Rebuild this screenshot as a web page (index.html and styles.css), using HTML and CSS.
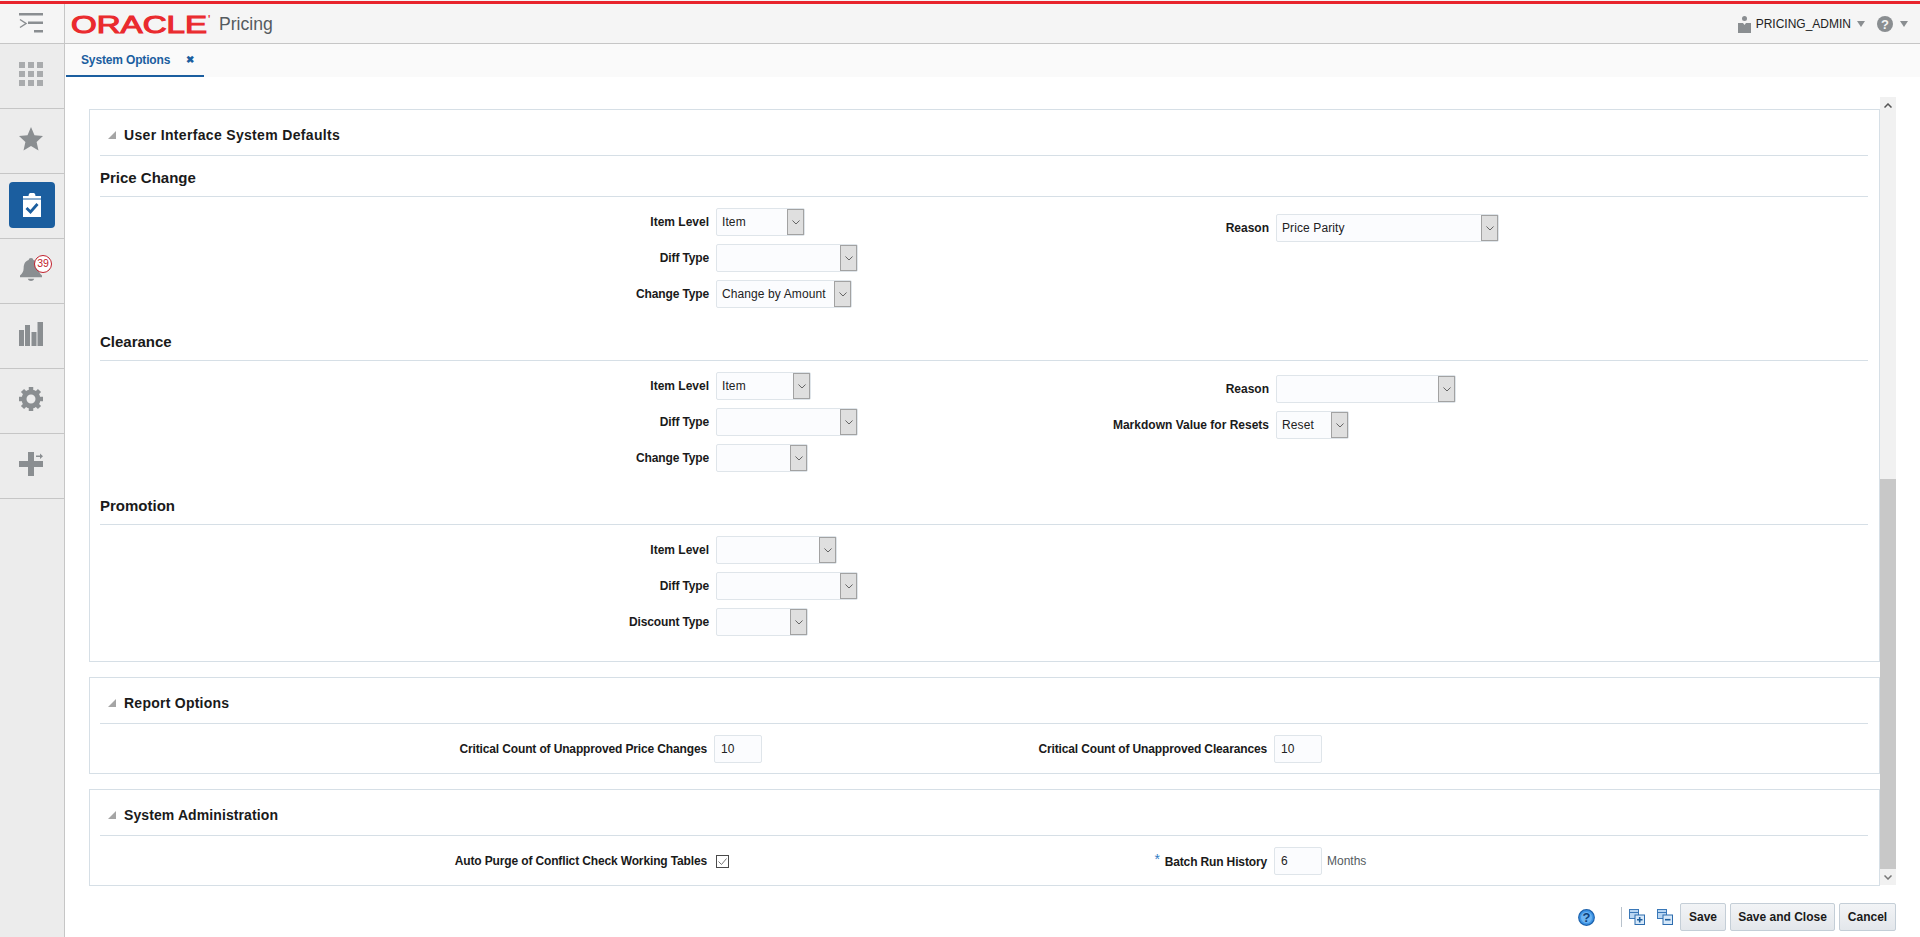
FILE: index.html
```html
<!DOCTYPE html>
<html lang="en">
<head>
<meta charset="utf-8">
<title>System Options</title>
<link rel="stylesheet" href="styles.css">
</head>
<body>
<header class="topbar">
  <div class="burger">
    <svg width="24" height="20" viewBox="0 0 24 20"><path d="M0 0h24v2.500H0zM9 8.500h15v2.500H9zM15 17h9v2.500h-9z" fill="#8a8e91"/><path d="M1 6.500l6 4-6 4" fill="none" stroke="#8a8e91" stroke-width="1.500"/></svg>
  </div>
  <div class="brand">
    <svg class="logo" width="142" height="28" viewBox="0 0 142 28"><text x="0" y="23" textLength="136" lengthAdjust="spacingAndGlyphs" class="logo-text">ORACLE</text><text x="137" y="13" class="logo-mark">'</text></svg>
    <span class="product">Pricing</span>
  </div>
  <div class="user">
    <svg width="13" height="17" viewBox="0 0 13 17"><circle cx="6.500" cy="2.500" r="2.500" fill="#8a8e91"/><path d="M0 7h5l1.500 2L8 7h5v10H0z" fill="#8a8e91"/></svg>
    <span class="user-name">PRICING_ADMIN</span>
    <span class="caret"></span>
    <svg class="help-grey" width="16" height="16" viewBox="0 0 16 16"><circle cx="8" cy="8" r="8" fill="#8a8e91"/><text x="8" y="12.500" text-anchor="middle" class="q-mark">?</text></svg>
    <span class="caret caret-last"></span>
  </div>
</header>
<div class="body-row">
  <nav class="sidebar">
    <div class="nav-item">
      <svg width="24" height="24" viewBox="0 0 24 24" fill="#a9abad"><path d="M0 0h6v6H0zM9 0h6v6H9zM18 0h6v6h-6zM0 9h6v6H0zM9 9h6v6H9zM18 9h6v6h-6zM0 18h6v6H0zM9 18h6v6H9zM18 18h6v6h-6z"/></svg>
    </div>
    <div class="nav-item">
      <svg width="24" height="24" viewBox="0 0 24 24"><path d="M12 0l3.500 8.300 8.500.8-6.400 5.800 1.900 8.700L12 19l-7.500 4.600 1.900-8.700L0 9.100l8.500-.8z" fill="#8a8e91"/></svg>
    </div>
    <div class="nav-item">
      <div class="nav-active">
        <svg width="18" height="24" viewBox="0 0 18 24"><path d="M0 3h5.500a3.500 3.500 0 0 1 7 0H18v21H0z" fill="#fff"/><path d="M0 6h18" stroke="#1b5e9f" stroke-width="1"/><path d="M3.500 15l4 4 7-8" fill="none" stroke="#1b5e9f" stroke-width="2.800"/></svg>
      </div>
    </div>
    <div class="nav-item">
      <svg class="bell" width="22" height="24" viewBox="0 0 24 26"><path d="M12 1c1.500 0 2.500 1 2.500 2.200C18.500 4.500 20 8 20 12c0 4 1.500 6 4 8v2H0v-2c2.500-2 4-4 4-8 0-4 1.500-7.500 5.500-8.800C9.500 2 10.500 1 12 1z" fill="#8a8e91"/><path d="M8.500 23.500h7c-.5 1.500-2 2.500-3.500 2.500s-3-1-3.500-2.500z" fill="#8a8e91"/></svg>
      <span class="badge">39</span>
    </div>
    <div class="nav-item">
      <svg width="24" height="24" viewBox="0 0 24 24" fill="#8a8e91"><path d="M0 8h5v16H0zM6 3h5v21H6zM12.500 10h5v14h-5zM18.500 0H24v24h-5.500z"/></svg>
    </div>
    <div class="nav-item">
      <svg width="24" height="24" viewBox="0 0 24 24"><circle cx="12" cy="12" r="7" fill="none" stroke="#8a8e91" stroke-width="5"/><path d="M12 0v5M12 19v5M0 12h5M19 12h5M3.500 3.500l3.500 3.500M17 17l3.500 3.500M3.500 20.500L7 17M17 7l3.500-3.500" stroke="#8a8e91" stroke-width="4.500"/></svg>
    </div>
    <div class="nav-item">
      <svg width="24" height="24" viewBox="0 0 24 24" fill="#8a8e91"><path d="M9 0h6v9h9v6h-9v9H9v-9H0V9h9z"/><path d="M17 3.500h4V1.500l3 2.700-3 2.700V5h-4z"/></svg>
    </div>
  </nav>
  <main class="main">
    <div class="tabbar">
      <div class="tab"><span class="tab-label">System Options</span><span class="tab-close">&#10006;</span></div>
    </div>
    <div class="scroller">
      <div class="panels">
        <section class="panel panel-main">
          <h2 class="panel-title"><span class="disclosure"></span><span class="wide">User Interface System Defaults</span></h2>
          <h3 class="sub-title">Price Change</h3>
          <div class="form">
            <div class="col-left">
              <div class="row"><label class="lbl lbl-loose">Item Level</label><div class="sel w89"><span class="val">Item</span><span class="drop"><svg class="chev" width="9" height="5" viewBox="0 0 9 5"><path d="M.5.500l4 4 4-4" fill="none" stroke="#555" stroke-width="1"/></svg></span></div></div>
              <div class="row"><label class="lbl">Diff Type</label><div class="sel w142"><span class="val"></span><span class="drop"><svg class="chev" width="9" height="5" viewBox="0 0 9 5"><path d="M.5.500l4 4 4-4" fill="none" stroke="#555" stroke-width="1"/></svg></span></div></div>
              <div class="row"><label class="lbl">Change Type</label><div class="sel w136"><span class="val">Change by Amount</span><span class="drop"><svg class="chev" width="9" height="5" viewBox="0 0 9 5"><path d="M.5.500l4 4 4-4" fill="none" stroke="#555" stroke-width="1"/></svg></span></div></div>
            </div>
            <div class="col-right col-right-low">
              <div class="row"><label class="lbl lbl-loose">Reason</label><div class="sel w223"><span class="val">Price Parity</span><span class="drop"><svg class="chev" width="9" height="5" viewBox="0 0 9 5"><path d="M.5.500l4 4 4-4" fill="none" stroke="#555" stroke-width="1"/></svg></span></div></div>
            </div>
          </div>
          <h3 class="sub-title">Clearance</h3>
          <div class="form">
            <div class="col-left">
              <div class="row"><label class="lbl lbl-loose">Item Level</label><div class="sel w95"><span class="val">Item</span><span class="drop"><svg class="chev" width="9" height="5" viewBox="0 0 9 5"><path d="M.5.500l4 4 4-4" fill="none" stroke="#555" stroke-width="1"/></svg></span></div></div>
              <div class="row"><label class="lbl">Diff Type</label><div class="sel w142"><span class="val"></span><span class="drop"><svg class="chev" width="9" height="5" viewBox="0 0 9 5"><path d="M.5.500l4 4 4-4" fill="none" stroke="#555" stroke-width="1"/></svg></span></div></div>
              <div class="row"><label class="lbl">Change Type</label><div class="sel w92"><span class="val"></span><span class="drop"><svg class="chev" width="9" height="5" viewBox="0 0 9 5"><path d="M.5.500l4 4 4-4" fill="none" stroke="#555" stroke-width="1"/></svg></span></div></div>
            </div>
            <div class="col-right">
              <div class="row"><label class="lbl lbl-loose">Reason</label><div class="sel w180"><span class="val"></span><span class="drop"><svg class="chev" width="9" height="5" viewBox="0 0 9 5"><path d="M.5.500l4 4 4-4" fill="none" stroke="#555" stroke-width="1"/></svg></span></div></div>
              <div class="row"><label class="lbl lbl-loose">Markdown Value for Resets</label><div class="sel w73"><span class="val">Reset</span><span class="drop"><svg class="chev" width="9" height="5" viewBox="0 0 9 5"><path d="M.5.500l4 4 4-4" fill="none" stroke="#555" stroke-width="1"/></svg></span></div></div>
            </div>
          </div>
          <h3 class="sub-title">Promotion</h3>
          <div class="form form-last">
            <div class="col-left">
              <div class="row"><label class="lbl lbl-loose">Item Level</label><div class="sel w121"><span class="val"></span><span class="drop"><svg class="chev" width="9" height="5" viewBox="0 0 9 5"><path d="M.5.500l4 4 4-4" fill="none" stroke="#555" stroke-width="1"/></svg></span></div></div>
              <div class="row"><label class="lbl">Diff Type</label><div class="sel w142"><span class="val"></span><span class="drop"><svg class="chev" width="9" height="5" viewBox="0 0 9 5"><path d="M.5.500l4 4 4-4" fill="none" stroke="#555" stroke-width="1"/></svg></span></div></div>
              <div class="row"><label class="lbl">Discount Type</label><div class="sel w92"><span class="val"></span><span class="drop"><svg class="chev" width="9" height="5" viewBox="0 0 9 5"><path d="M.5.500l4 4 4-4" fill="none" stroke="#555" stroke-width="1"/></svg></span></div></div>
            </div>
          </div>
        </section>
        <section class="panel">
          <h2 class="panel-title"><span class="disclosure"></span>Report Options</h2>
          <div class="pair">
            <div class="row pair-left"><label class="lbl">Critical Count of Unapproved Price Changes</label><div class="num">10</div></div>
            <div class="row pair-right"><label class="lbl">Critical Count of Unapproved Clearances</label><div class="num">10</div></div>
          </div>
        </section>
        <section class="panel">
          <h2 class="panel-title"><span class="disclosure"></span><span class="narrow">System Administration</span></h2>
          <div class="pair">
            <div class="row pair-left"><label class="lbl">Auto Purge of Conflict Check Working Tables</label><span class="check"><svg width="13" height="13" viewBox="0 0 13 13"><rect x=".5" y=".5" width="12" height="12" fill="#fff" stroke="#4a4a4a"/><path d="M2.500 6.500l3 3 5-6" fill="none" stroke="#777" stroke-width="1"/></svg></span></div>
            <div class="row pair-right"><label class="lbl"><span class="req">*</span>Batch Run History</label><div class="num">6</div><span class="unit">Months</span></div>
          </div>
        </section>
      </div>
      <div class="scrollbar">
        <div class="sb-btn"><svg width="8" height="5" viewBox="0 0 8 5"><path d="M.5 4.500L4 1l3.500 3.500" fill="none" stroke="#555" stroke-width="1.500"/></svg></div>
        <div class="sb-track"></div>
        <div class="sb-thumb"></div>
        <div class="sb-btn"><svg width="8" height="5" viewBox="0 0 8 5"><path d="M.5.500L4 4 7.500.500" fill="none" stroke="#777" stroke-width="1.500"/></svg></div>
      </div>
    </div>
    <footer class="footer">
      <svg class="help-blue" width="17" height="17" viewBox="0 0 17 17"><circle cx="8.500" cy="8.500" r="7.800" fill="#3f95e6" stroke="#1c62ad" stroke-width="1.200"/><circle cx="8.500" cy="8.500" r="5.500" fill="#6db4f2"/><text x="8.500" y="12.800" text-anchor="middle" class="q-mark q-navy">?</text></svg>
      <span class="divider"></span>
      <svg class="tool" width="16" height="16" viewBox="0 0 16 16"><rect x=".5" y=".5" width="9" height="9" fill="#b9d6f2" stroke="#3a78b8"/><path d="M.5 3.500h9" stroke="#3a78b8"/><rect x="6" y="6" width="9.500" height="9.500" fill="#d6e8f9" stroke="#2d6cae"/><path d="M8 10.700h5.500M10.700 8v5.500" stroke="#1c5d9c" stroke-width="1.600"/></svg>
      <svg class="tool tool-2" width="16" height="16" viewBox="0 0 16 16"><rect x=".5" y=".5" width="9" height="9" fill="#b9d6f2" stroke="#3a78b8"/><path d="M.5 3.500h9" stroke="#3a78b8"/><rect x="6" y="6" width="9.500" height="9.500" fill="#d6e8f9" stroke="#2d6cae"/><path d="M8 10.700h5.500" stroke="#1c5d9c" stroke-width="1.600"/></svg>
      <button class="btn btn-first btn-save">Save</button>
      <button class="btn btn-close">Save and Close</button>
      <button class="btn btn-cancel">Cancel</button>
    </footer>
  </main>
</div>
</body>
</html>
```
FILE: styles.css
```css
* { box-sizing: border-box; }
html, body { margin: 0; height: 100%; overflow: hidden; }
body {
  font-family: "Liberation Sans", Arial, sans-serif;
  font-size: 12px;
  color: #1a1a1a;
  background: #fff;
  display: flex;
  flex-direction: column;
}
.topbar {
  height: 44px;
  flex: none;
  display: flex;
  align-items: center;
  background: #f5f5f5;
  border-bottom: 1px solid #c6c6c6;
  position: relative;
  padding-top: 5px;
}
.topbar::before {
  content: "";
  position: absolute;
  left: 0; right: 0; top: 1px;
  height: 3px;
  background: #e8242c;
}
.burger {
  width: 65px;
  height: 39px;
  margin-top: -1px;
  align-self: flex-start;
  padding: 9px 0 0 19px;
  border-right: 1px solid #c6c6c6;
}
.burger svg { display: block; }
.brand { display: flex; align-items: center; margin-left: 6px; }
.logo { display: block; overflow: visible; }
.logo-text { font-family: "Liberation Sans", sans-serif; font-weight: 400; font-size: 24px; fill: #ea2a2e; stroke: #ea2a2e; stroke-width: 1.1px; }
.logo-mark { font-family: "Liberation Sans", sans-serif; font-weight: 700; font-size: 10px; fill: #ea2a2e; }
.product { font-size: 17.6px; color: #555b60; margin-left: 6px; }
.user { margin-left: auto; display: flex; align-items: center; padding-right: 12px; }
.user-name { font-size: 12px; color: #222; margin-left: 5px; }
.caret {
  width: 0; height: 0;
  border-left: 4.5px solid transparent;
  border-right: 4.5px solid transparent;
  border-top: 6px solid #8a8e91;
  margin-left: 6px;
}
.caret-last { margin-left: 7px; }
.help-grey { margin-left: 12px; }
.q-mark { font-family: "Liberation Sans", sans-serif; font-weight: 700; font-size: 13px; fill: #f5f5f5; }
.q-navy { fill: #0f3f7a; }
.body-row { flex: 1; display: flex; min-height: 0; }
.sidebar {
  width: 65px;
  flex: none;
  background: #ececec;
  border-right: 1px solid #c6c6c6;
}
.nav-item {
  height: 65px;
  border-bottom: 1px solid #c6c6c6;
  display: flex;
  align-items: center;
  justify-content: center;
  position: relative;
}
.nav-item > svg { margin: 0 2px 5px 0; }
.nav-item > .bell { margin: 0 3px 4px 0; }
.nav-active {
  width: 46px;
  height: 46px;
  margin-bottom: 2px;
  border-radius: 4px;
  background: #1b5e9f;
  display: flex;
  align-items: center;
  justify-content: center;
}
.badge {
  position: absolute;
  left: 34px;
  top: 16px;
  width: 18px;
  height: 18px;
  border-radius: 50%;
  background: #fff;
  border: 1.500px solid #c0202c;
  color: #c0202c;
  font-size: 10.5px;
  line-height: 15px;
  text-align: center;
}
.main { flex: 1; min-width: 0; display: flex; flex-direction: column; }
.tabbar { height: 33px; flex: none; background: #fafafa; padding-left: 1px; }
.tab {
  width: 138px;
  height: 33px;
  padding-left: 15px;
  display: flex;
  align-items: center;
  border-bottom: 2px solid #1b5e9f;
  color: #1b5e9f;
  font-weight: 700;
}
.tab-label { letter-spacing: -.15px; }
.tab-close { font-size: 10px; margin-left: 16px; }
.scroller { flex: 1; min-height: 0; display: flex; padding: 20px 24px 0 24px; }
.panels { flex: 1; min-width: 0; padding-top: 12px; display: flex; flex-direction: column; gap: 15px; }
.panel { flex: none; border: 1px solid #d6dfe6; padding: 0 11px 0 10px; background: #fff; }
.panel-main { height: 553px; }
.panel-title {
  margin: 0;
  height: 46px;
  padding-top: 5px;
  display: flex;
  align-items: center;
  font-size: 14px;
  font-weight: 700;
  border-bottom: 1px solid #d6dfe6;
  letter-spacing: .25px;
}
.wide { letter-spacing: .33px; }
.narrow { letter-spacing: .1px; }
.disclosure {
  width: 0; height: 0;
  margin: 0 8px 0 8px;
  border-left: 8px solid transparent;
  border-bottom: 8px solid #a5a5a5;
}
.sub-title {
  margin: 0;
  height: 41px;
  padding-top: 2px;
  display: flex;
  align-items: center;
  font-size: 15px;
  font-weight: 700;
  border-bottom: 1px solid #d6dfe6;
}
.form { display: flex; height: 123px; padding-top: 11px; }
.form-last { height: auto; }
.col-left { width: 900px; display: flex; flex-direction: column; gap: 8px; }
.col-right { padding-top: 3px; display: flex; flex-direction: column; gap: 8px; }
.col-right-low { padding-top: 6px; }
.col-left .lbl { width: 609px; }
.col-right .lbl { width: 269px; }
.row { display: flex; align-items: center; height: 28px; }
.lbl { font-weight: 700; text-align: right; margin-right: 7px; flex: none; color: #1a1a1a; letter-spacing: -.14px; }
.lbl-loose { letter-spacing: 0; }
.sel {
  height: 28px;
  display: flex;
  border: 1px solid #dfe5ea;
  border-radius: 2px;
  background: #fbfcfe;
}
.val { flex: 1; padding-left: 5px; line-height: 26px; color: #222; white-space: nowrap; letter-spacing: .1px; }
.drop {
  width: 17px;
  flex: none;
  display: flex;
  align-items: center;
  justify-content: center;
  background: #dfdfdf;
  border: 1px solid #a2a2a2;
}
.chev { width: 8px; height: 4.500px; }
.w73 { width: 73px; }
.w89 { width: 89px; }
.w92 { width: 92px; }
.w95 { width: 95px; }
.w121 { width: 121px; }
.w136 { width: 136px; }
.w142 { width: 142px; }
.w180 { width: 180px; }
.w223 { width: 223px; }
.pair { display: flex; height: 49px; padding-top: 1px; align-items: center; }
.pair-left { width: 900px; }
.pair-left .lbl { width: 607px; }
.pair-right .lbl { width: 267px; }
.num {
  width: 48px;
  height: 28px;
  border: 1px solid #dfe5ea;
  border-radius: 2px;
  background: #fbfcfe;
  padding-left: 6px;
  line-height: 27px;
  color: #222;
}
.check { display: flex; margin-left: 2px; }
.unit { margin-left: 5px; color: #555b60; }
.req { color: #2f7cc4; font-size: 14px; margin-right: 5px; font-weight: 400; position: relative; top: -2px; }
.scrollbar { width: 16px; flex: none; display: flex; flex-direction: column; background: #f1f1f1; }
.sb-btn { height: 16px; flex: none; display: flex; align-items: center; justify-content: center; }
.sb-track { height: 366px; flex: none; }
.sb-thumb { flex: 1; background: #c8c8c8; }
.footer {
  height: 52px;
  flex: none;
  display: flex;
  align-items: center;
  padding: 12px 24px 0 0;
  justify-content: flex-end;
}
.help-blue { margin-right: 26px; }
.divider { width: 1px; height: 20px; background: #b8c2cc; margin-right: 7px; }
.tool { flex: none; }
.tool-2 { margin-left: 12px; }
.btn {
  height: 28px;
  padding: 0;
  margin-left: 4px;
  border: 1px solid #c4ced7;
  border-radius: 2px;
  background: linear-gradient(#f2f4f6, #e3e7eb);
  font-family: "Liberation Sans", sans-serif;
  font-size: 12px;
  font-weight: 700;
  color: #1a1a1a;
}
.btn-save { width: 46px; }
.btn-close { width: 105px; }
.btn-cancel { width: 57px; }
.btn-first { margin-left: 7px; }
```
